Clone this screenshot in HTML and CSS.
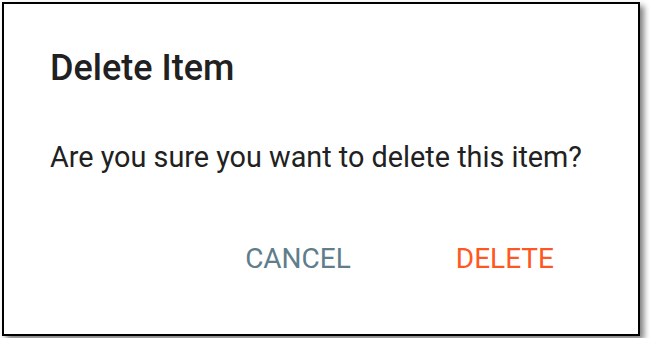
FILE: index.html
```html
<!DOCTYPE html>
<html>
<head>
<meta charset="utf-8">
<link rel="stylesheet" href="styles.css">
</head>
<body>
<div class="dialog">
  <h2 class="title">Delete Item</h2>
  <p class="message">Are you sure you want to delete this item?</p>
  <div class="actions">
    <button class="btn btn-cancel">CANCEL</button>
    <button class="btn btn-delete">DELETE</button>
  </div>
</div>
</body>
</html>
```

FILE: styles.css
```css
html, body {
  margin: 0;
  padding: 0;
  background: #ffffff;
}
body {
  padding: 2px;
  font-family: Roboto, "Liberation Sans", sans-serif;
}
.dialog {
  box-sizing: border-box;
  width: 638px;
  height: 334px;
  border: 2px solid #000;
  background: #fff;
  box-shadow: 4px 4px 6px rgba(0,0,0,0.5);
  padding: 40px 46px 0 46px;
  display: flex;
  flex-direction: column;
}
.title {
  margin: 0;
  font-size: 36px;
  font-weight: 500;
  color: #212121;
  line-height: 48px;
}
.message {
  margin: 45px 0 0 0;
  font-size: 28.8px;
  color: #212121;
  line-height: 40px;
}
.actions {
  display: flex;
  justify-content: flex-end;
  gap: 105px;
  margin-top: 62px;
  margin-right: 38px;
}
.btn {
  background: none;
  border: none;
  padding: 0;
  font-family: Roboto, "Liberation Sans", sans-serif;
  font-size: 28px;
  line-height: 40px;
}
.btn-cancel { color: #607d8b; }
.btn-delete { color: #ff5722; }
```
